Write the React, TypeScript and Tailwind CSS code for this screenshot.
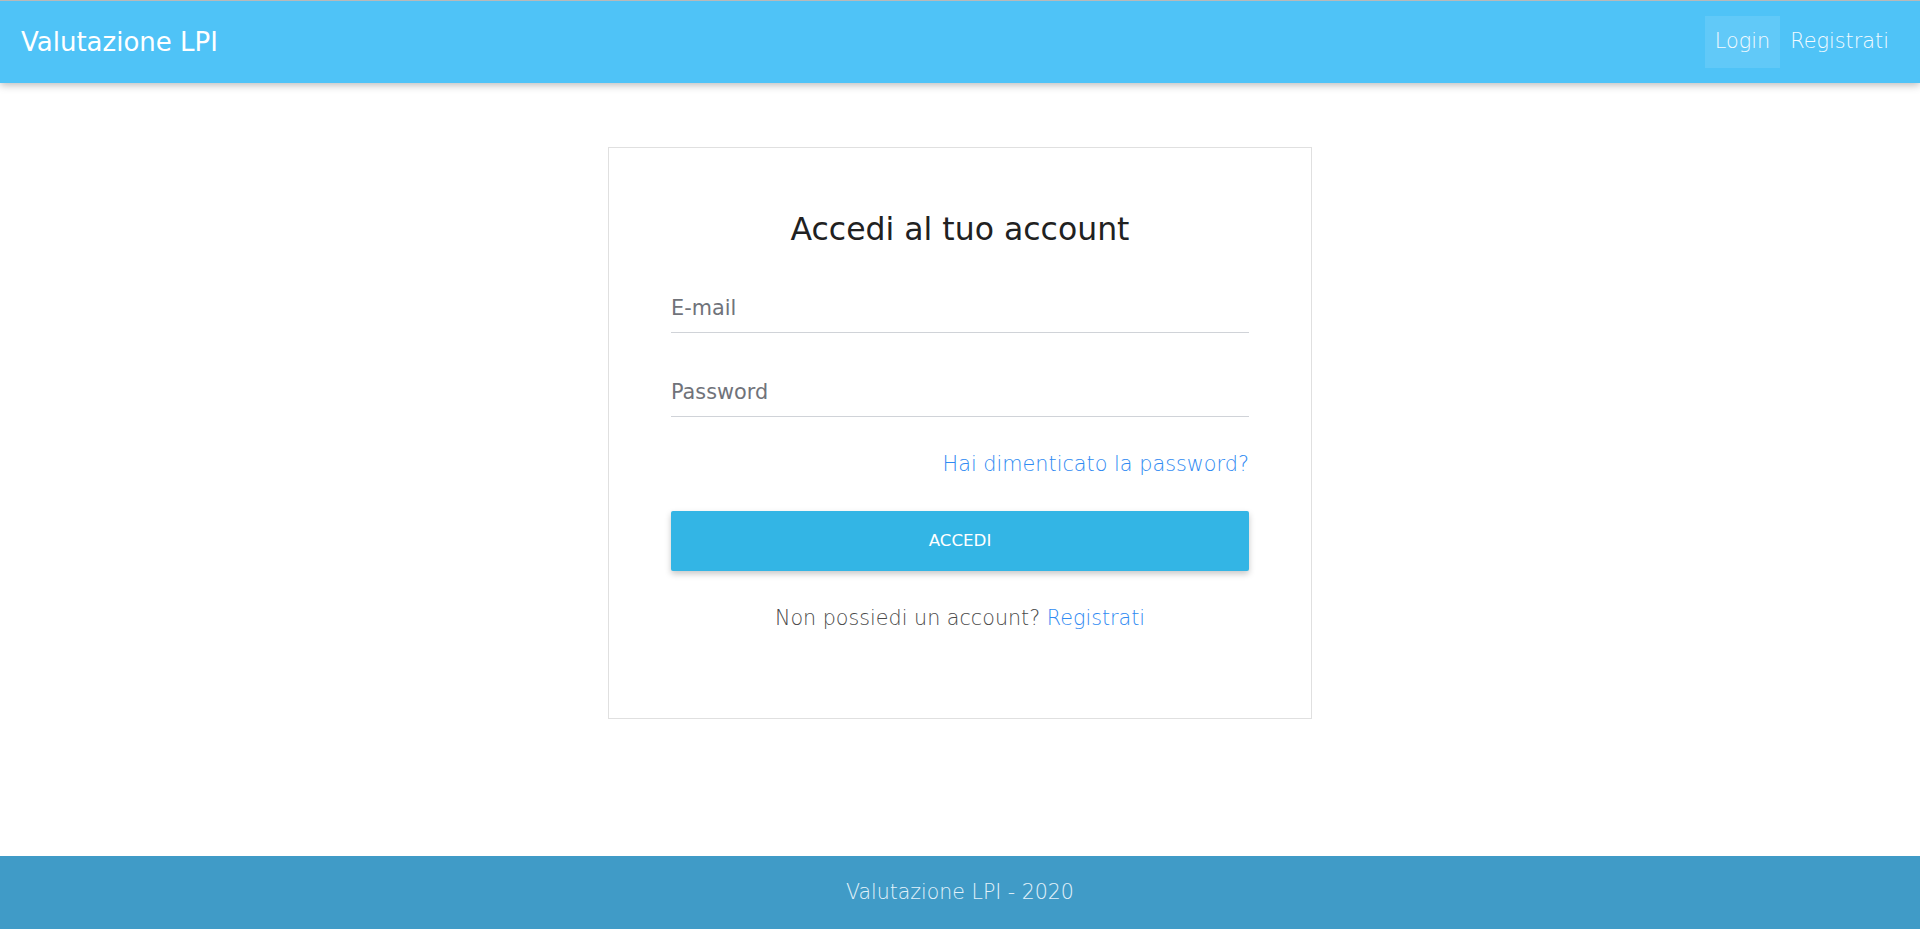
const font = { fontFamily: '"DejaVu Sans", "Liberation Sans", sans-serif' };

function Navbar() {
  return (
    <nav className="relative z-10 flex h-[83px] items-center justify-between border-t border-[#b9b9b9] bg-[#4fc3f7] pl-[21px] pr-[21px] shadow-[0_2px_8px_rgba(0,0,0,0.28)]">
      <a href="#" className="text-[26px] leading-none text-white">
        Valutazione LPI
      </a>
      <ul className="flex items-center">
        <li>
          <a href="#" className="flex h-[52px] items-center bg-white/10 px-[10px] text-[20.8px] font-light text-[#f4fbff]">
            Login
          </a>
        </li>
        <li>
          <a href="#" className="flex h-[52px] items-center px-[10px] text-[20.8px] font-light text-[#f4fbff]">
            Registrati
          </a>
        </li>
      </ul>
    </nav>
  );
}

function Field({ label }: { label: string }) {
  return (
    <div className="flex h-[50px] items-center border-b border-[#d0d3d8] pt-[1px]">
      <span className="text-[20.8px] leading-6 text-[#70737a]">{label}</span>
    </div>
  );
}

function LoginCard() {
  return (
    <div className="w-[704px] border border-[#e0e0e0] bg-white px-[62px] pt-[61px] pb-[88px]">
      <h1 className="text-center text-[31.5px] leading-10 text-[#212121]">Accedi al tuo account</h1>
      <div className="mt-[34px] flex flex-col gap-[34px]">
        <Field label="E-mail" />
        <Field label="Password" />
      </div>
      <div className="mt-[35px] text-right text-[20.8px] leading-6 font-light text-[#2f8af2]">
        <a href="#">Hai dimenticato la password?</a>
      </div>
      <button className="mt-[35px] flex h-[60px] w-full items-center justify-center rounded-[2px] bg-[#33b5e5] text-[16.7px] text-white shadow-[0_3px_6px_rgba(0,0,0,0.22)]">
        ACCEDI
      </button>
      <p className="mt-[35px] text-center text-[20.7px] leading-6 font-light text-[#4a4a4a]">
        Non possiedi un account? <a href="#" className="text-[#2f8af2]">Registrati</a>
      </p>
    </div>
  );
}

export default function App() {
  return (
    <div className="flex min-h-screen flex-col bg-white" style={font}>
      <Navbar />
      <main className="flex flex-1 items-start justify-center pt-[64px]">
        <LoginCard />
      </main>
      <footer className="flex h-[73px] items-center justify-center bg-[#409bc7] text-[20.5px] font-light text-[#e3f2fa]">
        Valutazione LPI - 2020
      </footer>
    </div>
  );
}
